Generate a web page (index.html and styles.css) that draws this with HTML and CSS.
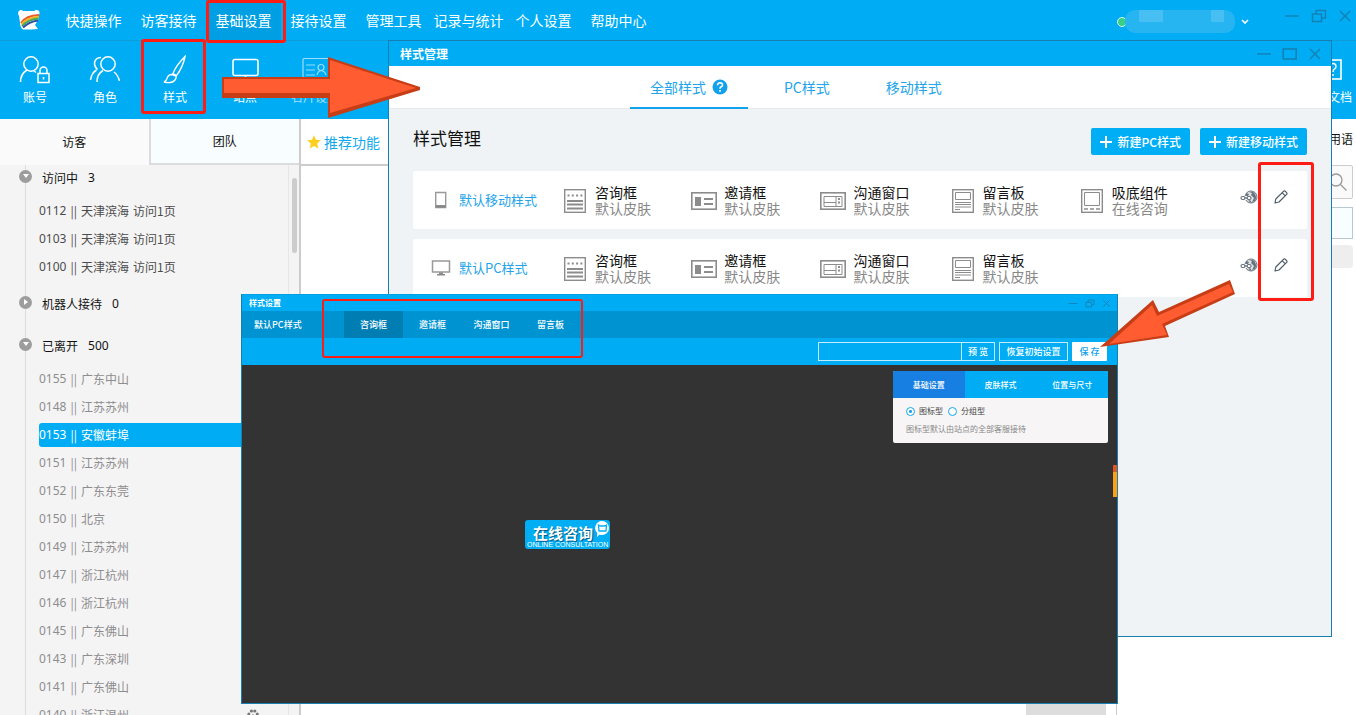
FILE: index.html
```html
<!DOCTYPE html>
<html lang="zh-CN">
<head>
<meta charset="utf-8">
<title>样式管理</title>
<link rel="stylesheet" href="styles.css">
</head>
<body>
<svg class="sprite" aria-hidden="true">
  <symbol id="i-form" viewBox="0 0 22 24"><g fill="none" stroke="#8c8c8c" stroke-width="1.4"><rect x=".7" y=".7" width="20.6" height="22.6"/><path d="M3.5 6.5h15" stroke-width="2" stroke-dasharray="2 2.3"/><path d="M3 12h16M3 15.5h16M3 19.5h16" stroke-width="1.8"/></g></symbol>
  <symbol id="i-invite" viewBox="0 0 26 18"><rect x=".8" y=".8" width="24.4" height="16.4" fill="none" stroke="#8c8c8c" stroke-width="1.6"/><path d="M4 5h6v9H4zM13 6h9v2h-9zM13 11h9v2h-9z" fill="#8c8c8c"/></symbol>
  <symbol id="i-chat" viewBox="0 0 26 18"><g fill="none" stroke="#8c8c8c"><rect x=".8" y=".8" width="24.4" height="16.4" stroke-width="1.6"/><path d="M4 4.5h18v10H4zM16 4.5v10M4 10.5h12"/><path d="M19 6v6.5" stroke-width="2" stroke-dasharray="2 1.5"/></g></symbol>
  <symbol id="i-board" viewBox="0 0 22 24"><g fill="none" stroke="#8c8c8c"><rect x=".7" y=".7" width="20.6" height="22.6" stroke-width="1.4"/><path d="M3.5 3.5h15v7h-15zM3 13.5h16M3 15.5h16M3 18h16M3 20.5h5"/></g></symbol>
  <symbol id="i-bottom" viewBox="0 0 22 24"><g fill="none" stroke="#8c8c8c"><rect x=".7" y=".7" width="20.6" height="22.6" stroke-width="1.4"/><path d="M3.5 3.5h15v13h-15z"/><path d="M3 20h16" stroke-width="1.6" stroke-dasharray="4 2"/></g></symbol>
  <symbol id="i-globe" viewBox="0 0 18 14"><circle cx="11" cy="7" r="6" fill="#dfe3e6" stroke="#68737d"/><path d="M9 2l3 1-1 2 3 3-2 4 3-1c2-3 1-7-2-9zM6 3l3 1-1 2-2 1zM8 11l4 2-2-3z" fill="#68737d"/><path d="M4 8h6" stroke="#fff" stroke-width="4"/><g fill="#fff" stroke="#68737d" stroke-width="1.2"><rect x="1" y="6.5" width="4" height="3" rx="1.5"/><rect x="7" y="6.5" width="4" height="3" rx="1.5"/><path d="M4 8h4"/></g></symbol>
  <symbol id="i-pencil" viewBox="0 0 14 14"><g fill="none" stroke="#4d5c68" stroke-width="1.2" stroke-linejoin="round"><path d="M1 13l.8-4L9.5 1.3q.8-.8 1.7 0l1.4 1.3q.8.9 0 1.7L5 12zM8.3 2.8l3 3"/></g></symbol>
  <symbol id="i-min" viewBox="0 0 16 14"><path d="M1 7h14" stroke="currentColor" stroke-width="1.4"/></symbol>
  <symbol id="i-max" viewBox="0 0 16 14"><rect x="1.2" y="2" width="13" height="10" fill="none" stroke="currentColor" stroke-width="1.6"/></symbol>
  <symbol id="i-restore" viewBox="0 0 16 14"><path d="M1.5 5h9v7.500h-9zM5 5V1.500h9.500V9h-4" fill="none" stroke="currentColor" stroke-width="1.5"/></symbol>
  <symbol id="i-close" viewBox="0 0 14 14"><path d="M2 2l10 10M12 2L2 12" stroke="currentColor" stroke-width="1.5"/></symbol>
</svg>

<div class="app">
  <header class="topbar">
    <svg class="logo" viewBox="0 0 22 20"><path d="M1 1q2-2 4 0h11q3-2 5 0 1 2 0 4l-1 5-3 5 3 4-7 .5H5q-3-2-3-7L1 6Q-1 3 1 1z" fill="#fff"/><g fill="none" stroke-width="2"><path d="M3 13Q8 5.500 21 5" stroke="#f05a28"/><path d="M3.500 14.500Q9 7.500 21 6.800" stroke="#f7b52c"/><path d="M4 16Q10 9.500 20.500 8.600" stroke="#4aa84e"/><path d="M5 17.500Q11 11.500 20 10.400" stroke="#2b4fa8"/></g></svg>
    <nav class="menu">
      <button>快捷操作</button><button>访客接待</button><button class="on">基础设置</button><button>接待设置</button><button>管理工具</button><button>记录与统计</button><button>个人设置</button><button>帮助中心</button>
    </nav>
    <div class="user"><i class="dot"></i><span class="masked"><i></i><i></i></span>
      <svg width="8" height="5" viewBox="0 0 8 5"><path d="M1 1l3 3 3-3" fill="none" stroke="#fff" stroke-width="1.6"/></svg></div>
    <div class="controls main-controls">
      <button aria-label="最小化"><svg width="16" height="14"><use href="#i-min"/></svg></button>
      <button aria-label="还原"><svg width="16" height="14"><use href="#i-restore"/></svg></button>
      <button aria-label="关闭"><svg width="14" height="14"><use href="#i-close"/></svg></button>
    </div>
  </header>

  <div class="toolbar">
    <button><svg viewBox="0 0 32 30"><g fill="none" stroke="#fff" stroke-width="1.5"><circle cx="12" cy="9" r="7.200"/><path d="M1.500 27q0-8 6.500-12M15 16l2 1.500"/><rect x="19" y="18.500" width="11" height="9"/><path d="M21 18.500v-3a3.500 3.500 0 017 0v3M24.500 22v2.500"/></g></svg>账号</button>
    <button><svg viewBox="0 0 32 30"><g fill="none" stroke="#fff" stroke-width="1.500"><circle cx="19" cy="9" r="7.200"/><path d="M8 27q0-8 6-11.500M25 17q4 3 5.500 9M12 2.500q-6 0-6.500 6 0 3.500 3 6M1.500 25q1-7 6-10"/></g></svg>角色</button>
    <button><svg viewBox="0 0 32 30"><g fill="none" stroke="#fff" stroke-width="1.400"><path d="M26 1.500q-9 9-12 17l3.500 2Q24 12 26 1.500zM13 19.500q-4 0-5 4-1 3-3 3.500 8 2 11-2 1.500-2 1-4z"/></g></svg>样式</button>
    <button><svg viewBox="0 0 32 30"><g fill="none" stroke="#fff" stroke-width="1.600"><rect x="4" y="4.500" width="25" height="16" rx="2"/><path d="M16.500 21v4M11 26h11"/></g></svg>站点</button>
    <button class="dim"><svg viewBox="0 0 32 30"><g fill="none" stroke="#fff" stroke-width="1.200"><rect x="4" y="3.500" width="26" height="22" rx="1"/><path d="M7 10h9M7 15h9M7 20h9"/><circle cx="22" cy="12.500" r="3"/><path d="M18 20q1-4 4-4.500 4 .5 5 4.500"/></g></svg>名片设置</button>
    <button class="last"><svg viewBox="0 0 24 30"><rect x="1" y="5" width="20" height="19" fill="none" stroke="#fff" stroke-width="1.600"/><path d="M10 12q0-3.500 3-3.500t3 3q0 1.500-1.500 2.500T13 17M13 19v2" fill="none" stroke="#fff" stroke-width="1.400"/></svg>文档</button>
  </div>

  <div class="body">
    <aside class="side">
      <div class="side-tabs"><button class="on">访客</button><button>团队</button></div>
      <div class="tree">
        <section>
          <h3><i class="knob down"></i>访问中<b>3</b></h3>
          <ul class="live">
            <li><span>0112</span><span>||</span><span>天津滨海</span><span>访问1页</span></li>
            <li><span>0103</span><span>||</span><span>天津滨海</span><span>访问1页</span></li>
            <li><span>0100</span><span>||</span><span>天津滨海</span><span>访问1页</span></li>
          </ul>
        </section>
        <section><h3><i class="knob right"></i>机器人接待<b>0</b></h3></section>
        <section>
          <h3><i class="knob down"></i>已离开<b>500</b></h3>
          <ul>
            <li><span>0155</span><span>||</span><span>广东中山</span></li>
            <li><span>0148</span><span>||</span><span>江苏苏州</span></li>
            <li class="on"><span>0153</span><span>||</span><span>安徽蚌埠</span></li>
            <li><span>0151</span><span>||</span><span>江苏苏州</span></li>
            <li><span>0152</span><span>||</span><span>广东东莞</span></li>
            <li><span>0150</span><span>||</span><span>北京</span></li>
            <li><span>0149</span><span>||</span><span>江苏苏州</span></li>
            <li><span>0147</span><span>||</span><span>浙江杭州</span></li>
            <li><span>0146</span><span>||</span><span>浙江杭州</span></li>
            <li><span>0145</span><span>||</span><span>广东佛山</span></li>
            <li><span>0143</span><span>||</span><span>广东深圳</span></li>
            <li><span>0141</span><span>||</span><span>广东佛山</span></li>
            <li><span>0140</span><span>||</span><span>浙江温州</span><svg class="paw" viewBox="0 0 12 12"><g fill="#777"><circle cx="1.800" cy="5" r="1.500"/><circle cx="4.400" cy="2" r="1.600"/><circle cx="7.800" cy="2" r="1.600"/><circle cx="10.300" cy="5" r="1.500"/><path d="M6 5l4 4q0 3-4 2-4 1-4-2z"/></g></svg></li>
          </ul>
        </section>
        <i class="thumb"></i>
      </div>
    </aside>
    <main class="work">
      <div class="work-head"><svg width="14" height="14" viewBox="0 0 14 14"><path d="M7 .3l2 4.500 4.800.5-3.600 3.300 1 5L7 11.100l-4.200 2.500 1-5L.2 5.300 5 4.800z" fill="#ffcf1f"/></svg>推荐功能</div>
      <div class="send"></div>
    </main>
    <aside class="phrases">
      <h3>用语</h3>
      <button class="find" aria-label="搜索"><svg width="20" height="20" viewBox="0 0 20 20"><g fill="none" stroke="#999" stroke-width="1.300"><circle cx="8" cy="8" r="6"/><path d="M12.500 12.500l6 6"/></g></svg></button>
      <div class="slot"></div>
      <div class="pill"></div>
    </aside>
  </div>

  <section class="win win-list">
    <div class="titlebar">样式管理
      <div class="controls">
        <button aria-label="最小化"><svg width="16" height="14"><use href="#i-min"/></svg></button>
        <button aria-label="最大化"><svg width="16" height="14"><use href="#i-max"/></svg></button>
        <button aria-label="关闭"><svg width="14" height="14"><use href="#i-close"/></svg></button>
      </div>
    </div>
    <nav class="tabs">
      <button class="on">全部样式<svg width="16" height="16" viewBox="0 0 16 16"><circle cx="8" cy="8" r="7.500" fill="#12a2ec"/><path d="M5.500 6.300q.2-2.600 2.600-2.600 2.500.1 2.400 2.200 0 1.200-1.300 1.900Q8 8.500 8 9.700M8 11v1.800" fill="none" stroke="#fff" stroke-width="1.600"/></svg></button><button>PC样式</button><button>移动样式</button>
    </nav>
    <div class="list-body">
      <div class="list-head"><h1>样式管理</h1>
        <div class="actions"><button><i class="plus"></i>新建PC样式</button><button><i class="plus"></i>新建移动样式</button></div>
      </div>
      <article class="card">
        <a href="#"><svg width="20" height="18" viewBox="0 0 20 18"><path d="M4.700 1.500h10v15h-10z" fill="none" stroke="#999" stroke-width="1.400"/><path d="M5 15.300h9.500" stroke="#888" stroke-width="2.500"/></svg>默认移动样式</a>
        <div class="part"><svg class="tall"><use href="#i-form"/></svg><p>咨询框<small>默认皮肤</small></p></div>
        <div class="part"><svg class="wide"><use href="#i-invite"/></svg><p>邀请框<small>默认皮肤</small></p></div>
        <div class="part"><svg class="wide"><use href="#i-chat"/></svg><p>沟通窗口<small>默认皮肤</small></p></div>
        <div class="part"><svg class="tall"><use href="#i-board"/></svg><p>留言板<small>默认皮肤</small></p></div>
        <div class="part"><svg class="tall"><use href="#i-bottom"/></svg><p>吸底组件<small>在线咨询</small></p></div>
        <div class="ops"><button aria-label="链接"><svg width="18" height="14"><use href="#i-globe"/></svg></button><button aria-label="编辑"><svg width="14" height="14"><use href="#i-pencil"/></svg></button></div>
      </article>
      <article class="card">
        <a href="#"><svg width="20" height="18" viewBox="0 0 20 18"><path d="M1.500 2h17v11h-17z" fill="none" stroke="#999" stroke-width="1.500"/><path d="M8 13.500h4V15h2v1.500H6V15h2z" fill="#888"/></svg>默认PC样式</a>
        <div class="part"><svg class="tall"><use href="#i-form"/></svg><p>咨询框<small>默认皮肤</small></p></div>
        <div class="part"><svg class="wide"><use href="#i-invite"/></svg><p>邀请框<small>默认皮肤</small></p></div>
        <div class="part"><svg class="wide"><use href="#i-chat"/></svg><p>沟通窗口<small>默认皮肤</small></p></div>
        <div class="part"><svg class="tall"><use href="#i-board"/></svg><p>留言板<small>默认皮肤</small></p></div>
        <div class="part"></div>
        <div class="ops"><button aria-label="链接"><svg width="18" height="14"><use href="#i-globe"/></svg></button><button aria-label="编辑"><svg width="14" height="14"><use href="#i-pencil"/></svg></button></div>
      </article>
    </div>
  </section>

  <section class="win win-edit">
    <div class="titlebar">样式设置
      <div class="controls">
        <button aria-label="最小化"><svg width="10" height="9"><use href="#i-min"/></svg></button>
        <button aria-label="还原"><svg width="10" height="9"><use href="#i-restore"/></svg></button>
        <button aria-label="关闭"><svg width="9" height="9"><use href="#i-close"/></svg></button>
      </div>
    </div>
    <nav class="edit-tabs"><span>默认PC样式</span><button class="on">咨询框</button><button>邀请框</button><button>沟通窗口</button><button>留言板</button></nav>
    <div class="edit-bar">
      <div class="preview"><input type="text" aria-label="预览地址"><button>预 览</button></div>
      <button class="line">恢复初始设置</button>
      <button class="save">保 存</button>
    </div>
    <div class="canvas">
      <div class="panel">
        <nav><button class="on">基础设置</button><button>皮肤样式</button><button>位置与尺寸</button></nav>
        <div class="panel-body">
          <div class="radios"><label><input type="radio" name="kind" checked>图标型</label><label><input type="radio" name="kind">分组型</label></div>
          <p>图标型默认由站点的全部客服接待</p>
        </div>
      </div>
      <div class="badge"><strong>在线咨询</strong><span>ONLINE CONSULTATION</span>
        <svg viewBox="0 0 16 18"><path d="M8 1a7 7 0 017 7 7 7 0 01-7 7q-1.500 0-2.500-.5L3 17l.3-4A7 7 0 018 1z" fill="#fff"/><path d="M4.500 5l2 1h4l2-1-.5 6h-7z" fill="#fff" stroke="#00aef6" stroke-width="1.300"/></svg></div>
      <i class="marker"></i>
    </div>
  </section>

  <i class="mark mark-menu"></i><i class="mark mark-tool"></i><i class="mark mark-edit"></i><i class="mark mark-tabs"></i>
  <svg class="arrow arrow-right" viewBox="0 0 200 64"><path d="M1 21h106V1l92 30v3L107 62V42H1z" fill="#c63d16"/><path d="M3 23h106V4l86 28-86 25V37H3z" fill="#ff5c32"/></svg>
  <svg class="arrow arrow-save" viewBox="0 0 138 70"><path d="M1 67l53-47 6 12 71-32 5 14-70 32 4 11z" fill="#c63d16"/><path d="M10 64l43-39 5 11 72-32 4 8-71 32 5 11z" fill="#ff5c32"/></svg>
</div>
</body>
</html>
```
FILE: styles.css
```css
* { box-sizing: border-box; margin: 0; padding: 0; }
body { font: 12px/16px "Noto Sans CJK SC", sans-serif; color: #111; background: #fff; }
button { font: inherit; color: inherit; background: none; border: 0; }
ul { list-style: none; }
svg { flex: none; display: block; }
.sprite { position: absolute; width: 0; height: 0; }
.app { position: relative; height: 100vh; overflow: hidden; display: flex; flex-direction: column; }

.topbar { height: 41px; flex: none; display: flex; align-items: center; background: #00adf5; border-bottom: 1px solid #109cd9; color: #fff; }
.logo { width: 22px; height: 20px; margin: 0 16px 0 18px; }
.menu { display: flex; align-self: stretch; flex: 1; }
.menu button { width: 75px; font-size: 14px; white-space: nowrap; }
.menu .on { background: #009fe3; }
.user { display: flex; align-items: center; gap: 6px; margin-right: 35px; padding-top: 3px; }
.dot { width: 10px; height: 10px; border-radius: 50%; border: 1px solid #d5ffe9; background: #3bcf86; margin-right: -8px; }
.masked { width: 110px; height: 23px; border-radius: 10px; background: #27b5f2; display: flex; gap: 48px; padding-left: 14px; overflow: hidden; }
.masked i { width: 24px; height: 12px; background: #48bff3; }
.masked i + i { width: 13px; }
.controls { display: flex; align-items: center; gap: 10px; color: #1282b5; margin-left: auto; }
.main-controls { gap: 11px; margin: 0 4px 8px 0; }

.toolbar { height: 78px; flex: none; display: flex; padding-top: 14px; background: #00adf5; color: #fff; }
.toolbar button { width: 70px; display: flex; flex-direction: column; align-items: center; gap: 4px; justify-content: flex-start; white-space: nowrap; }
.toolbar svg { width: 32px; height: 30px; }
.toolbar .dim { opacity: .6; }
.toolbar .last { width: 40px; margin-left: auto; padding-right: 4px; align-items: flex-end; }
.toolbar .last svg { width: 24px; margin-right: 8px; }

.body { flex: 1; min-height: 0; display: flex; }
.side { width: 301px; flex: none; display: flex; flex-direction: column; border-right: 2px solid #ccc; background: #f5f4f5; }
.side-tabs { height: 46px; flex: none; display: flex; background: #fafafa; }
.side-tabs button { flex: 1; }
.side-tabs button + button { background: #f8fdff; border: solid #dcdcdc; border-width: 0 0 2px 2px; }
.tree { flex: 1; min-height: 0; overflow: clip; position: relative; border-right: 10px solid #f5f4f5; background: linear-gradient(90deg, transparent 25px, #ddd 25px, #ddd 26px, transparent 26px, transparent calc(100% - 1px), #e6e6e6 calc(100% - 1px)); overflow-clip-margin: content-box 10px; }
.tree section { padding-bottom: 10px; }
.tree h3 { height: 26px; margin: 0 0 6px 19px; display: flex; align-items: center; font-weight: 400; font-size: 12px; }
.tree b { font-weight: 400; margin-left: 10px; font-family: "Noto Sans", sans-serif; }
.knob { width: 13px; height: 13px; margin: 0 10px 4px 0; border-radius: 50%; background: #9d9d9d; display: grid; place-items: center; }
.knob::after { content: ""; border: 3px solid transparent; }
.knob.down::after { border-top: 4px solid #fff; border-bottom: 0; }
.knob.right::after { border-left: 4px solid #fff; border-right: 0; }
.tree ul { padding: 2px 0 0 39px; }
.tree li { height: 24px; margin-bottom: 4px; display: flex; align-items: center; gap: 4px; color: #8d8d8d; border-radius: 3px 0 0 3px; }
.tree li:last-child { margin-bottom: 2px; }
.tree li span:first-child { font-family: "Noto Sans", sans-serif; }
.tree .live li { color: #4c4c4c; }
.tree li.on { background: #00adf5; color: #fff; }
.paw { width: 12px; height: 12px; margin-left: 114px; }
.thumb { position: absolute; right: -8px; top: 13px; width: 5px; height: 75px; border-radius: 3px; background: #ccc; }

.work { flex: 1; display: flex; flex-direction: column; justify-content: space-between; }
.work-head { height: 47px; padding-left: 6px; display: flex; align-items: center; gap: 3px; font-size: 14px; color: #12a8ee; border-bottom: 2px solid #ccc; }
.send { width: 80px; height: 20px; margin-right: 10px; align-self: flex-end; background: #ddd; }
.phrases { width: 240px; border-left: 1px solid #ccc; padding: 12px 3px 0 0; display: flex; flex-direction: column; align-items: flex-end; }
.phrases h3 { font-size: 12px; font-weight: 400; }
.find { width: 40px; height: 34px; margin-top: 18px; padding-left: 14px; background: #fafafa; border: 1px solid #ccc; border-radius: 2px; }
.slot { width: 40px; height: 32px; margin-top: 8px; border: 1px solid #b8c8d2; background: #f8fdff; }
.pill { width: 40px; height: 23px; margin-top: 6px; border-radius: 4px; background: #eee; }

.win { position: absolute; display: flex; flex-direction: column; border: 1px solid #1780b0; }
.titlebar { flex: none; display: flex; align-items: center; background: #00adf5; color: #fff; font-weight: 700; }
.win-list { left: 388px; right: 24px; top: 40px; bottom: 78px; background: #eff3f6; }
.win-list .titlebar { height: 25px; padding: 0 9px 0 11px; }
.tabs { height: 43px; flex: none; display: flex; gap: 16px; padding-left: 241px; background: #fff; border-bottom: 1px solid #e6eaed; font-size: 14px; color: #24a4ea; }
.tabs button { padding: 0 20px; display: flex; align-items: center; gap: 6px; margin-bottom: -1px; border-bottom: 2px solid transparent; }
.tabs .on { border-color: #12a2ec; }
.list-body { padding: 19px 24px; display: flex; flex-direction: column; gap: 10px; }
.list-head { display: flex; align-items: flex-start; justify-content: space-between; height: 27px; margin-bottom: 6px; }
h1 { font-size: 17px; line-height: 20px; font-weight: 400; }
.actions { display: flex; gap: 10px; align-self: stretch; }
.actions button { display: flex; align-items: center; gap: 5px; padding: 0 9px; border-radius: 2px; background: #00aef6; color: #fff; font-weight: 500; }
.plus { width: 12px; height: 12px; background: linear-gradient(#fff, #fff) center / 12px 2px no-repeat, linear-gradient(#fff, #fff) center / 2px 12px no-repeat; }
.card { height: 58px; display: grid; grid-template-columns: 149px repeat(5, 1fr) 99px; align-items: center; background: #fff; border-radius: 2px; }
.card a { display: flex; align-items: center; gap: 8px; padding-left: 18px; font-size: 13px; color: #24a4ea; text-decoration: none; white-space: nowrap; }
.part { display: flex; align-items: center; gap: 7px; font-size: 14px; }
.part svg { margin-top: 2px; }
.tall { width: 22px; height: 24px; margin: 0 2px; }
.wide { width: 26px; height: 18px; }
.part small { display: block; font-size: 14px; color: #888; }
.ops { display: flex; gap: 16px; align-items: center; padding: 0 0 6px 32px; }

.win-edit { left: 241px; right: 238px; top: 294px; bottom: 11px; background: #333; font-size: 9px; line-height: 12px; color: #fff; border-top-color: #00a0e2; }
.win-edit .titlebar { height: 16px; padding: 0 6px 0 7px; font-size: 8px; }
.win-edit .controls { gap: 7px; }
.edit-tabs { height: 27px; flex: none; display: flex; align-items: center; background: #0093d1; font-weight: 500; }
.edit-tabs span { width: 102px; padding-left: 12px; }
.edit-tabs button { width: 59px; height: 100%; }
.edit-tabs .on { background: #007eb3; }
.edit-bar { height: 27px; flex: none; display: flex; align-items: center; justify-content: flex-end; gap: 4px; padding-right: 10px; background: #00adf5; font-weight: 500; }
.preview { height: 19px; display: flex; border: 1px solid #c4ecff; }
.preview input { width: 142px; min-width: 0; border: 0; background: none; color: #fff; font: inherit; }
.preview button { width: 33px; border-left: 1px solid #c4ecff; }
.line { width: 69px; height: 19px; border: 1px solid #c4ecff; white-space: nowrap; }
.save { width: 35px; height: 19px; border-radius: 1px; background: #fff; color: #12a2ec; }
.canvas { position: relative; flex: 1; }
.panel { position: absolute; right: 9px; top: 6px; width: 215px; border-radius: 2px; overflow: hidden; background: #f7f5f6; color: #444; font-size: 8px; }
.panel nav { height: 27px; display: flex; background: #00adf5; color: #fff; font-weight: 500; }
.panel nav button { flex: 1; }
.panel nav .on { background: #187fe2; }
.panel-body { padding: 7px 13px 8px; display: flex; flex-direction: column; gap: 6px; }
.radios { display: flex; gap: 5px; }
.radios label { display: flex; align-items: center; gap: 4px; }
.radios input { appearance: none; width: 9px; height: 9px; border: 1px solid #12a8ee; border-radius: 50%; background: #fff; }
.radios input:checked { background: radial-gradient(#12a2ec 1px, #fff 2px); }
.panel p { color: #888; }
.badge { position: absolute; left: 283px; top: 155px; width: 85px; height: 29px; padding: 4px 0 0 2px; border-radius: 3px; background: #00aef6; }
.badge strong { display: block; padding-left: 6px; font-size: 15px; line-height: 17px; text-shadow: 1px 1px 1px #00567d; }
.badge span { display: block; font: 7px/7px "Liberation Sans", sans-serif; white-space: nowrap; }
.badge svg { position: absolute; right: 0; top: 0; width: 16px; height: 18px; }
.marker { position: absolute; right: 0; top: 100px; width: 4px; height: 32px; background: linear-gradient(#e0561c 7px, #ffa012 7px); }

.mark { position: absolute; border: 3px solid #ff1c14; border-radius: 3px; }
.mark-menu { left: 206px; top: 0; width: 80px; height: 43px; }
.mark-tool { left: 141px; top: 39px; width: 65px; height: 75px; }
.mark-edit { right: 42px; top: 162px; width: 56px; height: 139px; }
.mark-tabs { left: 322px; top: 299px; width: 261px; height: 59px; border-width: 2px; }
.arrow { position: absolute; }
.arrow-right { left: 221px; top: 56px; width: 200px; height: 64px; }
.arrow-save { right: 119px; top: 280px; width: 138px; height: 70px; }
```
